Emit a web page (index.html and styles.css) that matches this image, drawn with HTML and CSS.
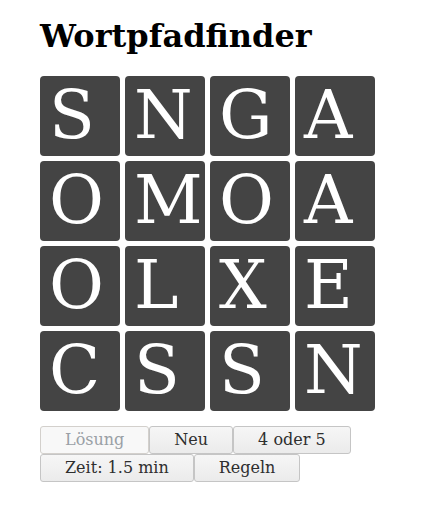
FILE: index.html
```html
<!DOCTYPE html>
<html lang="de">
<head>
<meta charset="utf-8">
<title>Wortpfadfinder</title>
<link rel="stylesheet" href="styles.css">
</head>
<body>
<main class="app">
  <h1 class="title">Wortpfadfinder</h1>
  <div class="board">
    <div class="tile">S</div><div class="tile">N</div><div class="tile">G</div><div class="tile">A</div>
    <div class="tile">O</div><div class="tile">M</div><div class="tile">O</div><div class="tile">A</div>
    <div class="tile">O</div><div class="tile">L</div><div class="tile">X</div><div class="tile">E</div>
    <div class="tile">C</div><div class="tile">S</div><div class="tile">S</div><div class="tile">N</div>
  </div>
  <div class="controls">
    <button class="btn btn-solution" disabled>Lösung</button>
    <button class="btn btn-new">Neu</button>
    <button class="btn btn-size">4 oder 5</button>
    <button class="btn btn-time">Zeit: 1.5 min</button>
    <button class="btn btn-rules">Regeln</button>
  </div>
</main>
</body>
</html>
```
FILE: styles.css
```css
html, body {
  margin: 0;
  padding: 0;
  background: #fff;
}
body {
  font-family: "DejaVu Serif", serif;
  color: #000;
}
.app {
  padding: 18px 0 0 40px;
  width: 335px;
}
.title {
  margin: 0 0 22px 0;
  font-size: 32px;
  font-weight: bold;
  line-height: 36px;
}
.board {
  display: grid;
  grid-template-columns: repeat(4, 80px);
  grid-auto-rows: 80px;
  gap: 5px;
}
.tile {
  background: #444;
  border-radius: 4px;
  color: #fff;
  font-size: 67px;
  line-height: 78px;
  text-align: left;
  padding-left: 9px;
  overflow: visible;
  white-space: nowrap;
}
.controls {
  display: flex;
  flex-wrap: wrap;
  gap: 0;
  margin-top: 15px;
}
.btn {
  font-family: "DejaVu Serif", serif;
  font-size: 16px;
  color: #2e2e2e;
  height: 28px;
  padding: 0 24px;
  border: 1px solid #c5c5c5;
  border-radius: 3px;
  background: linear-gradient(#f6f6f6, #ebebeb);
  margin: 0;
  line-height: 26px;
}
.btn:disabled {
  color: #9aa0a6;
  background: #f8f8f8;
  border-color: #d3d0cc;
}
```
